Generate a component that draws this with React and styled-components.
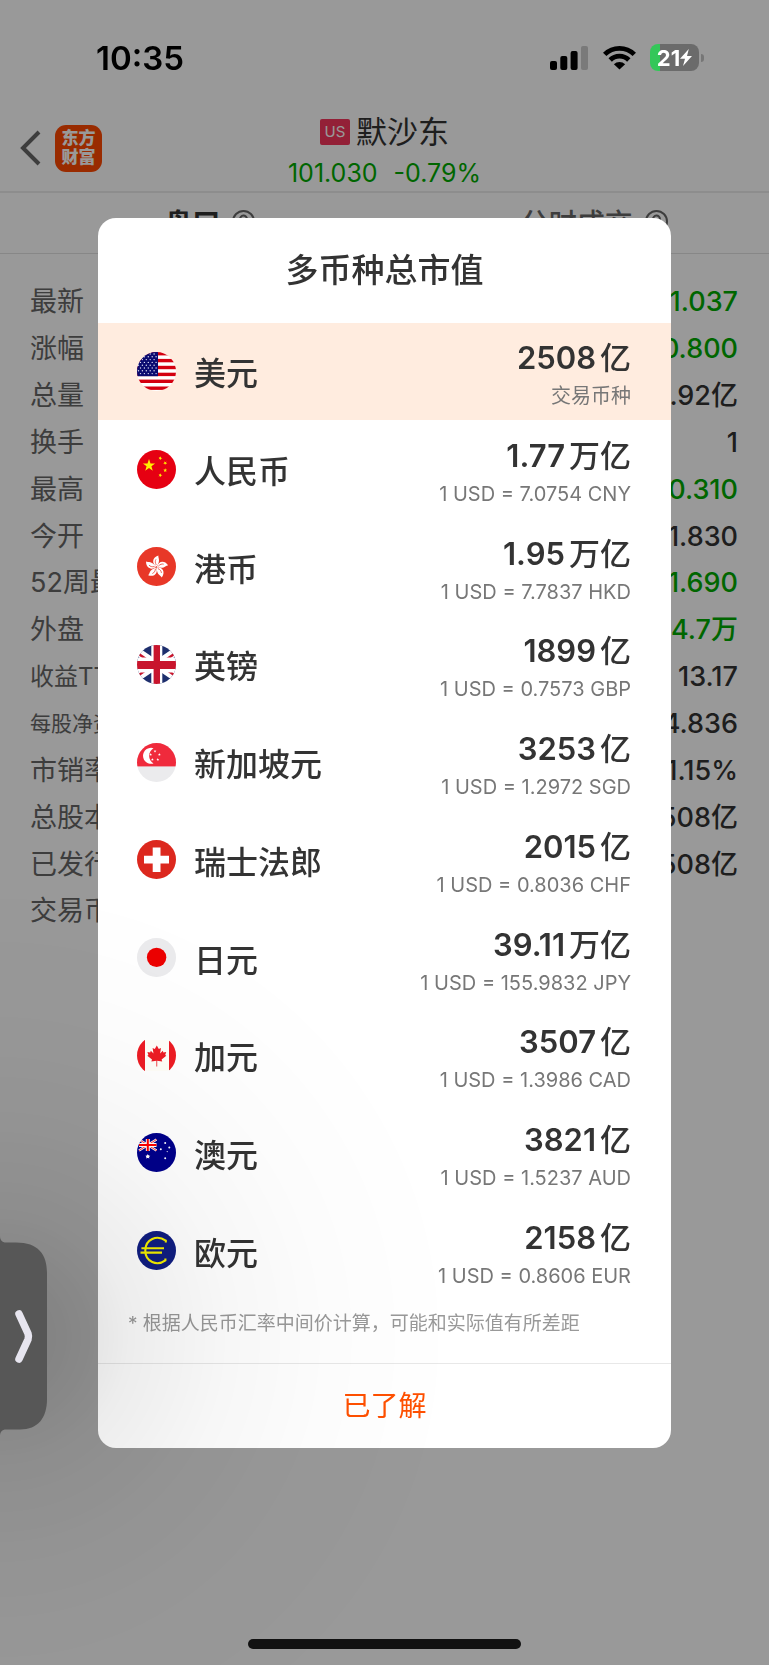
import React, { useState } from "react";
import styled, { createGlobalStyle } from "styled-components";

const GlobalStyle = createGlobalStyle`
  * {
    box-sizing: border-box;
  }
  body {
    margin: 0;
    background: #fff;
    color: #333;
    font-family: Inter, "Noto Sans CJK SC", sans-serif;
  }
  button {
    border: 0;
    padding: 0;
    background: none;
    color: inherit;
    font: inherit;
    cursor: pointer;
  }
`;

// Page
const Screen = styled.div`
  min-height: 100vh;
  overflow: hidden;
`;

const StatusBar = styled.div`
  position: relative;
  z-index: 3;
  display: flex;
  align-items: center;
  justify-content: space-between;
  height: 108px;
  padding: 7px 65px 0 96px;
  color: #000;
`;

const Clock = styled.span`
  font-size: 33px;
  font-weight: 600;
`;

const StatusIcons = styled.div`
  display: flex;
  align-items: center;
  gap: 14px;
`;

const Battery = styled.div`
  display: flex;
  align-items: center;
  gap: 2px;
`;

const BatteryBody = styled.div`
  display: flex;
  align-items: center;
  justify-content: center;
  width: 49px;
  height: 27px;
  border-radius: 8px;
  background: linear-gradient(90deg, #34c759 21%, #6b6b6b 21%);
  color: #fff;
  font-size: 22px;
  font-weight: 700;
`;

const BatteryTip = styled.div`
  width: 3px;
  height: 8px;
  border-radius: 0 4px 4px 0;
  background: #767676;
`;

const Header = styled.header`
  display: grid;
  grid-template-columns: 1fr auto 1fr;
  align-items: center;
  height: 85px;
  border-bottom: 2px solid #ececec;
`;

const HeaderLeft = styled.div`
  display: flex;
  align-items: center;
  gap: 14px;
  padding: 0 0 4px 20px;
`;

const IconButton = styled.button`
  display: flex;
`;

const Logo = styled.div`
  display: grid;
  place-content: center;
  width: 47px;
  height: 47px;
  border-radius: 11px;
  background: #ff4800;
  color: #fff;
  font-size: 17px;
  font-weight: 900;
  line-height: 19px;
  text-align: center;
`;

const HeaderTitle = styled.div`
  padding-top: 2px;
`;

const StockName = styled.h1`
  display: flex;
  align-items: center;
  justify-content: center;
  gap: 6px;
  margin: 0;
  font-size: 31px;
  font-weight: 400;
  line-height: 44px;
`;

const Market = styled.span`
  width: 30px;
  border-radius: 2px;
  background: #f5365c;
  color: #fff;
  font-size: 15px;
  line-height: 26px;
  text-align: center;
`;

const Quote = styled.div`
  display: flex;
  justify-content: center;
  gap: 16px;
  color: #00aa00;
  font-size: 25px;
  line-height: 38px;
`;

const Tabs = styled.nav`
  display: grid;
  grid-template-columns: 1fr 1fr;
  height: 61px;
  border-bottom: 1px solid #e2e2e2;
`;

const Tab = styled.button`
  display: flex;
  align-items: center;
  justify-content: center;
  gap: 12px;
  padding: 0 0 3px 35px;
  color: ${(props) => (props.$active ? "#333" : "#666")};
  font-size: 28px;
  font-weight: ${(props) => (props.$active ? 700 : 500)};
`;

const Stats = styled.table`
  width: 100%;
  height: 706px;
  padding: 25px 31px 25px 30px;
  border-spacing: 0;
`;

const StatLabel = styled.th`
  padding: 0;
  color: #666;
  font-size: ${(props) => props.$size || 27}px;
  font-weight: 400;
  line-height: 40px;
  text-align: left;
`;

const StatValue = styled.td`
  padding: 0;
  color: ${(props) => (props.$down ? "#00aa00" : "#333")};
  font-size: 27px;
  font-weight: 500;
  line-height: 40px;
  text-align: right;
`;

// Dialog
const Overlay = styled.div`
  position: fixed;
  inset: 0;
  z-index: 2;
  display: flex;
  align-items: center;
  justify-content: center;
  padding: 0 98px;
  background: rgba(0, 0, 0, 0.4);
`;

const Dialog = styled.section`
  width: 100%;
  overflow: hidden;
  border-radius: 18px;
  background: #fff;
`;

const DialogTitle = styled.h2`
  margin: 0;
  font-size: 33px;
  font-weight: 500;
  line-height: 105px;
  text-align: center;
`;

const CurrencyList = styled.ul`
  display: grid;
  grid-auto-rows: 1fr;
  min-height: 977px;
  margin: 0;
  padding: 0;
  list-style: none;
`;

const CurrencyRow = styled.li`
  display: flex;
  align-items: center;
  gap: 18px;
  padding: 0 40px 0 39px;
  background: ${(props) => (props.$selected ? "#ffecdf" : "transparent")};
`;

const FlagIcon = styled.svg`
  flex: none;
  width: 39px;
  height: 39px;
  border-radius: 50%;
`;

const CurrencyName = styled.span`
  flex: 1;
  font-size: 32px;
  font-weight: 500;
`;

const Amounts = styled.div`
  display: flex;
  flex-direction: column;
  align-items: flex-end;
  gap: 4px;
  padding-top: 6px;
`;

const Amount = styled.div`
  display: flex;
  gap: 4px;
  font-size: 31px;
  font-weight: 600;
  line-height: 40px;
`;

const Unit = styled.span`
  font-weight: 500;
`;

const Rate = styled.div`
  color: #777;
  font-size: 20px;
  line-height: 28px;
`;

const Note = styled.p`
  margin: 0;
  padding: 4px 30px 19px;
  color: #999;
  font-size: 19px;
  line-height: 40px;
`;

const ConfirmButton = styled.button`
  display: block;
  width: 100%;
  height: 85px;
  padding-bottom: 3px;
  border-top: 1px solid #e8e8e8;
  color: #ff5000;
  font-size: 28px;
`;

// Edge handle with its soft shadow
const HandleShadow = styled.div`
  position: fixed;
  left: 0;
  bottom: 0;
  z-index: 4;
  width: 500px;
  height: 828px;
  pointer-events: none;
  background: radial-gradient(
    circle at 0 500px,
    rgba(0, 0, 0, 0.16) 0,
    rgba(0, 0, 0, 0.13) 60px,
    rgba(0, 0, 0, 0.07) 130px,
    rgba(0, 0, 0, 0.03) 230px,
    rgba(0, 0, 0, 0.01) 330px,
    transparent 460px
  );
`;

const Handle = styled.button`
  position: fixed;
  left: 0;
  bottom: 229px;
  z-index: 5;
  display: flex;
`;

const HomeIndicator = styled.div`
  position: fixed;
  left: 50%;
  bottom: 16px;
  z-index: 5;
  width: 273px;
  height: 10px;
  margin-left: -137px;
  border-radius: 5px;
  background: #111;
`;

const stats = [
  { label: "最新", value: "101.037", down: true },
  { label: "涨幅", value: "-0.800", down: true },
  { label: "总量", value: "8.92亿" },
  { label: "换手", value: "1" },
  { label: "最高", value: "100.310", down: true },
  { label: "今开", value: "101.830" },
  { label: "52周最高", value: "71.690", down: true },
  { label: "外盘", value: "64.7万", down: true },
  { label: "收益TTM", value: "13.17", size: 24 },
  { label: "每股净资产", value: "4.836", size: 21 },
  { label: "市销率", value: "1.15%" },
  { label: "总股本", value: "2508亿" },
  { label: "已发行股本", value: "2508亿" },
  { label: "交易币种", value: "" },
];

const currencies = [
  { code: "USD", name: "美元", amount: "2508", unit: "亿", rate: "交易币种" },
  { code: "CNY", name: "人民币", amount: "1.77", unit: "万亿", rate: "1 USD = 7.0754 CNY" },
  { code: "HKD", name: "港币", amount: "1.95", unit: "万亿", rate: "1 USD = 7.7837 HKD" },
  { code: "GBP", name: "英镑", amount: "1899", unit: "亿", rate: "1 USD = 0.7573 GBP" },
  { code: "SGD", name: "新加坡元", amount: "3253", unit: "亿", rate: "1 USD = 1.2972 SGD" },
  { code: "CHF", name: "瑞士法郎", amount: "2015", unit: "亿", rate: "1 USD = 0.8036 CHF" },
  { code: "JPY", name: "日元", amount: "39.11", unit: "万亿", rate: "1 USD = 155.9832 JPY" },
  { code: "CAD", name: "加元", amount: "3507", unit: "亿", rate: "1 USD = 1.3986 CAD" },
  { code: "AUD", name: "澳元", amount: "3821", unit: "亿", rate: "1 USD = 1.5237 AUD" },
  { code: "EUR", name: "欧元", amount: "2158", unit: "亿", rate: "1 USD = 0.8606 EUR" },
];

// Five-pointed star as a polygon points string
const starPoints = (cx, cy, r, turn = 0) =>
  Array.from({ length: 10 }, (_, i) => {
    const radius = i % 2 ? r * 0.4 : r;
    const angle = ((i * 36 - 90 + turn) * Math.PI) / 180;
    return `${(cx + radius * Math.cos(angle)).toFixed(2)},${(cy + radius * Math.sin(angle)).toFixed(2)}`;
  }).join(" ");

const usStars = [];
for (let row = 0; row < 8; row++) {
  for (let col = 0; col < 6; col++) {
    usStars.push([(row % 2 ? 3.5 : 1.5) + col * 3.9, 2 + row * 2.8]);
  }
}

const flags = {
  USD: (
    <>
      <rect width="39" height="39" fill="#fff" />
      {[0, 6.9, 13.8, 20.7, 27.6, 34.5].map((y) => (
        <rect key={y} y={y} width="39" height="3.4" fill="#d40010" />
      ))}
      <rect width="21" height="24.2" fill="#0b0b70" />
      {usStars
        .filter(([x]) => x < 20)
        .map(([x, y]) => (
          <circle key={`${x}-${y}`} cx={x} cy={y} r="0.7" fill="#dfe0f5" />
        ))}
    </>
  ),
  CNY: (
    <>
      <rect width="39" height="39" fill="#e60012" />
      <g fill="#fff000">
        <polygon points={starPoints(12, 15.5, 6.4)} />
        <polygon points={starPoints(23.3, 8.2, 2.1, 20)} />
        <polygon points={starPoints(28.2, 13, 2.1, 40)} />
        <polygon points={starPoints(28.2, 20.3, 2.1)} />
        <polygon points={starPoints(23.3, 25.3, 2.1, 20)} />
      </g>
    </>
  ),
  HKD: (
    <>
      <rect width="39" height="39" fill="#e83828" />
      {[0, 72, 144, 216, 288].map((angle) => (
        <g key={angle} transform={`rotate(${angle} 19.5 20)`}>
          <path d="M19.5 19.5C15 17 14.5 10.5 21.4 8.4C20.8 11 24.2 13.4 19.5 19.5Z" fill="#fff" />
          <path d="M19.3 18C18 15.6 18 14 19 12.3" fill="none" stroke="#e83828" strokeWidth="0.7" />
        </g>
      ))}
    </>
  ),
  GBP: (
    <>
      <rect width="39" height="39" fill="#1e2f6d" />
      <path d="M-4 3.5L43 35.5M43 3.5L-4 35.5" stroke="#fff" strokeWidth="8" />
      <path d="M-4 5L19 21M43 34L20 18M-4 34L19 18M43 5L20 21" stroke="#c8152d" strokeWidth="2.6" />
      <path d="M19.8 0V39" stroke="#fff" strokeWidth="11" />
      <path d="M0 20H39" stroke="#fff" strokeWidth="15" />
      <path d="M19.8 0V39" stroke="#c8152d" strokeWidth="6.4" />
      <path d="M0 20H39" stroke="#c8152d" strokeWidth="7.8" />
    </>
  ),
  SGD: (
    <>
      <rect width="39" height="39" fill="#ebebed" />
      <rect width="39" height="23.4" fill="#f02a3c" />
      <path d="M16.5 5.2A8 8 0 1 0 16.5 20.4A8.8 8.8 0 0 1 16.5 5.2Z" fill="#fff" />
      <g fill="#fff">
        <polygon points={starPoints(18, 8.2, 1.5)} />
        <polygon points={starPoints(13.6, 11.6, 1.5)} />
        <polygon points={starPoints(22.4, 11.6, 1.5)} />
        <polygon points={starPoints(15.4, 16.6, 1.5)} />
        <polygon points={starPoints(20.8, 16.6, 1.5)} />
      </g>
    </>
  ),
  CHF: (
    <>
      <rect width="39" height="39" fill="#dc281e" />
      <path d="M19.6 7.5V32M7 19.7H32" stroke="#fff" strokeWidth="7.8" />
    </>
  ),
  JPY: (
    <>
      <rect width="39" height="39" fill="#ebebed" />
      <circle cx="19.6" cy="19.4" r="9.7" fill="#ec0000" />
    </>
  ),
  CAD: (
    <>
      <rect y="4" width="39" height="31" fill="#fffef8" />
      <path d="M0 4H8V35H0ZM32 4H39V35H32Z" fill="#ed1c24" />
      <path
        d="M19.8 9.5L17.8 13L15.6 12L16.5 17.4L13.8 14.8L13.2 16.4L10.4 16L11.4 19L10.3 19.8L15 23.6L14.4 25.6L19.4 24.8V30.5H20.2V24.8L25.2 25.6L24.6 23.6L29.3 19.8L28.2 19L29.2 16L26.4 16.4L25.8 14.8L23.1 17.4L24 12L21.8 13Z"
        fill="#ed1c24"
      />
    </>
  ),
  AUD: (
    <>
      <rect width="39" height="39" fill="#00008b" />
      <path d="M2 6.5L19.5 17.5M19.5 6.5L2 17.5" stroke="#fff" strokeWidth="2.4" />
      <path d="M2 6.5L19.5 17.5M19.5 6.5L2 17.5" stroke="#f00" strokeWidth="0.8" />
      <path d="M10.8 6V18M2 12H19.5" stroke="#fff" strokeWidth="4" />
      <path d="M10.8 6V18M2 12H19.5" stroke="#f00" strokeWidth="2" />
      <g fill="#fff">
        <polygon points={starPoints(10.8, 23.5, 2.7)} />
        <circle cx="10.8" cy="23.5" r="1.6" />
        <circle cx="28.2" cy="10" r="1" />
        <circle cx="23.8" cy="16.3" r="1" />
        <circle cx="32.3" cy="14.6" r="1" />
        <circle cx="30.2" cy="18.6" r="0.6" />
        <circle cx="28.2" cy="25.3" r="1" />
      </g>
    </>
  ),
  EUR: (
    <>
      <rect width="39" height="39" fill="#101e82" />
      <g fill="none" stroke="#f5f000" strokeWidth="2.1">
        <path d="M28.8 11.5V9.6C20 3.5 8.3 8 8.3 19.6C8.3 31 20 35.5 28.4 29.4V27.5" />
        <path d="M4.4 17.2H27M3.5 21.6H25" />
      </g>
    </>
  ),
};

const SignalIcon = () => (
  <svg width="39" height="25" viewBox="0 0 39 25">
    <rect x="0" y="16" width="7" height="9" rx="2" />
    <rect x="10.3" y="11" width="7" height="14" rx="2" />
    <rect x="20.6" y="6" width="7" height="19" rx="2" />
    <rect x="31" y="1" width="7" height="24" rx="2" fill="#7a7a7a" />
  </svg>
);

const WifiIcon = () => (
  <svg width="33" height="25" viewBox="0 0 33 25">
    <g fill="none" stroke="#000" strokeWidth="4.8">
      <path d="M1.7 9.4A21 21 0 0 1 31.3 9.4" />
      <path d="M7.2 15A13.2 13.2 0 0 1 25.8 15" />
    </g>
    <path d="M16.5 24.6L10.9 19.2A8 8 0 0 1 22.1 19.2Z" />
  </svg>
);

const BoltIcon = () => (
  <svg width="12" height="17" viewBox="0 0 12 17">
    <path d="M8.8 0L0 9.8H5L3 17L12 7H7Z" fill="#fff" />
  </svg>
);

const BackIcon = () => (
  <svg width="21" height="36" viewBox="0 0 21 36" fill="none" stroke="#666" strokeWidth="4">
    <path d="M19 2L3 18L19 34" />
  </svg>
);

const HelpIcon = () => (
  <svg width="23" height="23" viewBox="0 0 23 23" fill="none" stroke="#666" strokeWidth="2">
    <circle cx="11.5" cy="11.5" r="10.5" />
    <path d="M8 9.4A3.5 3.5 0 1 1 11.5 12.6V14.4M11.5 16V18" />
  </svg>
);

const HandleIcon = () => (
  <svg width="48" height="200" viewBox="0 0 48 200">
    <path
      d="M0 0C0 4 2 6.500 6 6.500H16C38 6.500 47 18 47 37V163C47 182 38 193.500 20 193.500H6C2 193.500 0 196 0 200Z"
      fill="#575757"
    />
    <path
      d="M19 78L28 97.500Q29 100.500 28 103.500L19 123"
      fill="none"
      stroke="#e7e5ef"
      strokeWidth="7.500"
      strokeLinecap="round"
      strokeLinejoin="round"
    />
  </svg>
);

const App = () => {
  const [open, setOpen] = useState(true);

  return (
    <Screen>
      <GlobalStyle />
      <StatusBar>
        <Clock>10:35</Clock>
        <StatusIcons>
          <SignalIcon />
          <WifiIcon />
          <Battery>
            <BatteryBody>
              21
              <BoltIcon />
            </BatteryBody>
            <BatteryTip />
          </Battery>
        </StatusIcons>
      </StatusBar>

      <Header>
        <HeaderLeft>
          <IconButton aria-label="返回">
            <BackIcon />
          </IconButton>
          <Logo>
            东方
            <br />
            财富
          </Logo>
        </HeaderLeft>
        <HeaderTitle>
          <StockName>
            <Market>US</Market>
            默沙东
          </StockName>
          <Quote>
            <span>101.030</span>
            <span>-0.79%</span>
          </Quote>
        </HeaderTitle>
      </Header>

      <Tabs>
        <Tab $active>
          盘口
          <HelpIcon />
        </Tab>
        <Tab>
          分时成交
          <HelpIcon />
        </Tab>
      </Tabs>

      <Stats>
        <tbody>
          {stats.map((item) => (
            <tr key={item.label}>
              <StatLabel scope="row" $size={item.size}>
                {item.label}
              </StatLabel>
              <StatValue $down={item.down}>{item.value}</StatValue>
            </tr>
          ))}
        </tbody>
      </Stats>

      {open && (
        <Overlay>
          <Dialog role="dialog" aria-labelledby="dialog-title">
            <DialogTitle id="dialog-title">多币种总市值</DialogTitle>
            <CurrencyList>
              {currencies.map((item) => (
                <CurrencyRow key={item.code} $selected={item.code === "USD"}>
                  <FlagIcon viewBox="0 0 39 39">{flags[item.code]}</FlagIcon>
                  <CurrencyName>{item.name}</CurrencyName>
                  <Amounts>
                    <Amount>
                      {item.amount}
                      <Unit>{item.unit}</Unit>
                    </Amount>
                    <Rate>{item.rate}</Rate>
                  </Amounts>
                </CurrencyRow>
              ))}
            </CurrencyList>
            <Note>* 根据人民币汇率中间价计算，可能和实际值有所差距</Note>
            <ConfirmButton onClick={() => setOpen(false)}>已了解</ConfirmButton>
          </Dialog>
        </Overlay>
      )}

      <HandleShadow />
      <Handle aria-label="展开">
        <HandleIcon />
      </Handle>
      <HomeIndicator />
    </Screen>
  );
};

export default App;
